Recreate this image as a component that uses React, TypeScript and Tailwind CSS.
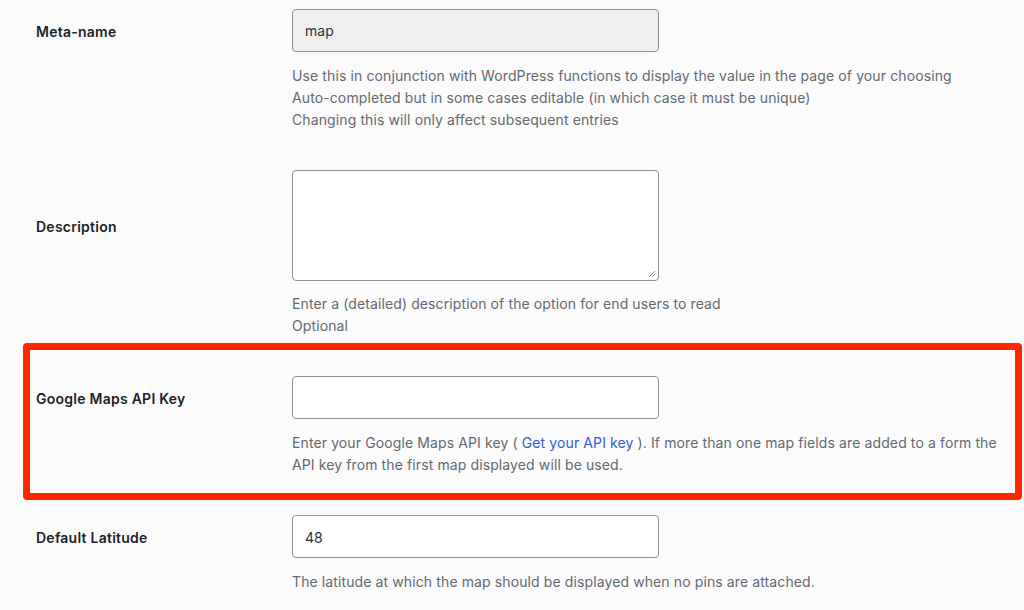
import React from 'react'

const font = { fontFamily: 'Inter, "Liberation Sans", sans-serif' }

function Label({ children }: { children: React.ReactNode }) {
    return (
        <div className="w-[256px] shrink-0 flex items-center pt-[1px] text-[14px] font-semibold tracking-[0.25px] text-[#1d2327]">
            {children}
        </div>
    )
}

function Help({ children }: { children: React.ReactNode }) {
    return (
        <div className="ml-[256px] pt-[1px] text-[14px] leading-[22px] tracking-[0.11px] text-[#646970]">
            {children}
        </div>
    )
}

export default function App() {
    return (
        <div style={font} className="min-h-screen w-full bg-[#fbfbfb] pl-[36px] pt-[9px] pb-6 overflow-hidden">

            {/* Meta-name */}
            <div className="flex">
                <Label>Meta-name</Label>
                <div className="w-[367px] h-[43px] flex items-center px-3 rounded-[4px] border border-[#8c8f94] bg-[#f0f0f1] text-[14px] text-[#2c3338]">
                    map
                </div>
            </div>
            <div className="mt-[12px]">
                <Help>
                    <div>Use this in conjunction with WordPress functions to display the value in the page of your choosing</div>
                    <div>Auto-completed but in some cases editable (in which case it must be unique)</div>
                    <div>Changing this will only affect subsequent entries</div>
                </Help>
            </div>

            {/* Description */}
            <div className="flex mt-[39px]">
                <Label>Description</Label>
                <div className="relative w-[367px] h-[111px] rounded-[4px] border border-[#8c8f94] bg-white">
                    <svg className="absolute right-[2px] bottom-[2px]" width="9" height="9" viewBox="0 0 9 9">
                        <path d="M8 2 L2 8 M8 5 L5 8" stroke="#8c8f94" strokeWidth="1" fill="none" />
                    </svg>
                </div>
            </div>
            <div className="mt-[11px]">
                <Help>
                    <div>Enter a (detailed) description of the option for end users to read</div>
                    <div>Optional</div>
                </Help>
            </div>

            {/* Google Maps API Key (highlighted) */}
            <div className="mt-[6px] -ml-[13px] w-[999px] border-[7px] border-[#ff2600] rounded-[4px] pl-[6px] pt-[26px] pb-[17px]">
                <div className="flex">
                    <Label>Google Maps API Key</Label>
                    <div className="w-[367px] h-[43px] rounded-[4px] border border-[#8c8f94] bg-white" />
                </div>
                <div className="mt-[12px]">
                    <Help>
                        <div>
                            Enter your Google Maps API key ( <a href="#" className="text-[#2f5bd6]">Get your API key</a> ). If more than one map fields are added to a form the
                        </div>
                        <div>API key from the first map displayed will be used.</div>
                    </Help>
                </div>
            </div>

            {/* Default Latitude */}
            <div className="flex mt-[15px]">
                <Label>Default Latitude</Label>
                <div className="w-[367px] h-[43px] flex items-center px-3 pt-[1px] rounded-[4px] border border-[#8c8f94] bg-white text-[14px] text-[#2c3338]">
                    48
                </div>
            </div>
            <div className="mt-[12px]">
                <Help>
                    <div>The latitude at which the map should be displayed when no pins are attached.</div>
                </Help>
            </div>
        </div>
    )
}
